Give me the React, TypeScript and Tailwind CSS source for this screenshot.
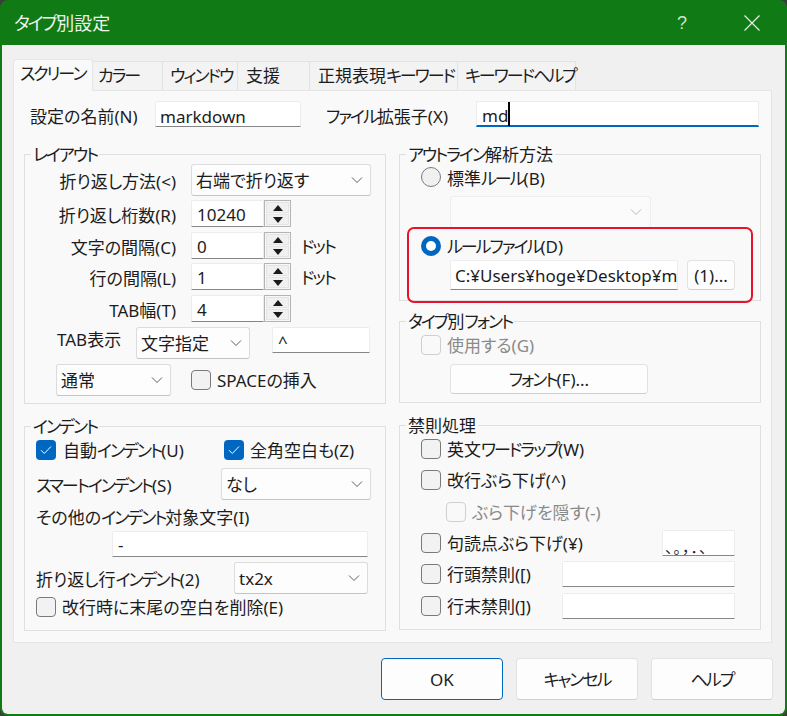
import type { ReactNode } from "react";

// katakana is set narrower in the dialog font, so tighten just those runs
function Tx({ children, pad = "pt-[2px]" }: { children: string; pad?: string }) {
  const parts = children.split(/([\u30A1-\u30FC]+)/);
  return (
    <span className={"block whitespace-nowrap " + pad}>
      {parts.map((p, i) =>
        i % 2 ? (
          <span key={i} className="tracking-[-2px]">
            {p}
          </span>
        ) : (
          p
        )
      )}
    </span>
  );
}

function Chevron({ muted }: { muted?: boolean }) {
  return (
    <svg width="12" height="8" viewBox="0 0 12 8" className="shrink-0" fill="none">
      <path d="M1 1.5 6 6.5 11 1.5" stroke={muted ? "#b5b5b5" : "#606060"} strokeWidth="1" />
    </svg>
  );
}

function Input({ value, className = "" }: { value?: string; className?: string }) {
  return (
    <div className={"flex items-center shrink-0 bg-white border border-[#ececec] border-b-[#868686] rounded-t-[2px] overflow-hidden whitespace-nowrap " + className}>
      {value}
    </div>
  );
}

function Select({ value, className = "" }: { value?: string; className?: string }) {
  return (
    <div className={"flex items-center justify-between shrink-0 h-[32px] bg-[#fdfdfd] border border-[#dcdcdc] border-b-[#c4c4c4] rounded-[3px] pl-[4px] pr-[7px] " + className}>
      <Tx>{value ?? ""}</Tx>
      <Chevron />
    </div>
  );
}

function Spin({ value }: { value: string }) {
  return (
    <div className="flex h-[27px] shrink-0">
      <Input value={value} className="w-[73px] h-[27px] pl-[5px] pt-[2px]" />
      <div className="flex flex-col w-[27px] h-[27px] border border-[#b4b4b4] bg-[#f7f7f7] p-[1px] gap-[1px]">
        <div className="flex-1 flex items-center justify-center bg-[#f0f0f0] border border-[#e4e4e4]">
          <svg width="10" height="6" viewBox="0 0 10 6"><path d="M5 0 10 6H0z" fill="#1a1a1a" /></svg>
        </div>
        <div className="flex-1 flex items-center justify-center bg-[#f0f0f0] border border-[#e4e4e4]">
          <svg width="10" height="6" viewBox="0 0 10 6"><path d="M5 6 10 0H0z" fill="#1a1a1a" /></svg>
        </div>
      </div>
    </div>
  );
}

function Check({ checked, disabled }: { checked?: boolean; disabled?: boolean }) {
  if (checked) {
    return (
      <div className="w-[20px] h-[20px] shrink-0 rounded-[4px] bg-[#0067c0] flex items-center justify-center">
        <svg width="12" height="10" viewBox="0 0 12 10" fill="none">
          <path d="M1 5.2 4.3 8.5 11 1.5" stroke="#fff" strokeWidth="1" />
        </svg>
      </div>
    );
  }
  return (
    <div
      className={
        "w-[20px] h-[20px] shrink-0 rounded-[4px] border " +
        (disabled ? "border-[#cfcfcf] bg-[#f9f9f9]" : "border-[#7a7a7a] bg-[#f2f2f2]")
      }
    />
  );
}

function Radio({ checked }: { checked?: boolean }) {
  if (checked) {
    return (
      <div className="w-[20px] h-[20px] shrink-0 rounded-full bg-[#0067c0] flex items-center justify-center">
        <div className="w-[10px] h-[10px] rounded-full bg-white" />
      </div>
    );
  }
  return <div className="w-[20px] h-[20px] shrink-0 rounded-full border border-[#7a7a7a] bg-[#f0f0f0]" />;
}

function Btn({ children, className = "", primary }: { children: string; className?: string; primary?: boolean }) {
  return (
    <div
      className={
        "flex items-center justify-center shrink-0 bg-[#fdfdfd] border rounded-[4px] " +
        (primary ? "border-[#0067c0] " : "border-[#e2e2e2] border-b-[#cfcfcf] ") +
        className
      }
    >
      <Tx>{children}</Tx>
    </div>
  );
}

function Group({ title, className = "", children }: { title: string; className?: string; children: ReactNode }) {
  return (
    <div className={"relative border border-[#dfdfdf] " + className}>
      <span className="absolute left-[6px] top-[-10px] h-[22px] bg-[#f9f9f9] px-[2px]">
        <Tx pad="pt-0">{title}</Tx>
      </span>
      {children}
    </div>
  );
}

function Label({ children }: { children: string }) {
  return (
    <div className="w-[151px] text-right shrink-0">
      <Tx pad="pt-[4px]">{children}</Tx>
    </div>
  );
}

function CheckRow({ label, className = "", disabled }: { label: string; className?: string; disabled?: boolean }) {
  return (
    <div className={"flex items-center gap-[6px] h-[20px] " + className}>
      <Check disabled={disabled} />
      <Tx>{label}</Tx>
    </div>
  );
}

const TABS = [
  { label: "カラー", cls: "w-[70px] pl-[5px]" },
  { label: "ウィンドウ", cls: "w-[75px] pl-[7px]" },
  { label: "支援", cls: "w-[72px] pl-[8px]" },
  { label: "正規表現キーワード", cls: "w-[148px] pl-[8px]" },
  { label: "キーワードヘルプ", cls: "w-[118px] pl-[7px]" },
];

export default function App() {
  return (
    <div className="w-[787px] h-[716px] bg-[#3c3c3c] text-[#1c1c1c] text-[17px] leading-[20px] font-['Noto_Sans','Noto_Sans_CJK_JP',sans-serif] [font-feature-settings:'palt'] overflow-hidden">
      <div className="h-full flex flex-col bg-[#107a14] rounded-[8px] px-[2px] pb-[2px]">
        <div className="h-[45px] shrink-0 flex items-center pl-[12px] pr-[25px] text-[#eef5ee] text-[18px]">
          <Tx pad="pt-0">タイプ別設定</Tx>
          <span className="ml-auto w-[16px] text-center text-[#cfe3cf] font-['Liberation_Sans',sans-serif]">?</span>
          <svg width="16" height="16" viewBox="0 0 16 16" className="ml-[54px]" fill="none">
            <path d="M.5.5l15 15M15.5.5l-15 15" stroke="#e8f2e8" strokeWidth="1.2" />
          </svg>
        </div>

        <div className="flex-1 bg-[#f0f0f0] rounded-b-[6px] pl-[11px] pt-[14px]">
          <div className="flex items-end h-[31px]">
            <div className="w-[80px] h-[32px] relative z-10 -mb-px bg-[#f9f9f9] border border-[#e5e5e5] border-b-0 rounded-t-[3px] pl-[6px] pt-[4px]">
              <Tx pad="pt-0">スクリーン</Tx>
            </div>
            {TABS.map((t) => (
              <div key={t.label} className={"h-[29px] bg-[#f3f3f3] border-t border-r border-[#e3e3e3] pt-[4px] " + t.cls}>
                <Tx pad="pt-0">{t.label}</Tx>
              </div>
            ))}
          </div>

          <div className="w-[759px] h-[553px] bg-[#f9f9f9] border border-[#e5e5e5] pl-[10px]">
            <div className="flex items-center h-[26px] mt-[10px] pl-[6px]">
              <div className="w-[125px] shrink-0"><Tx pad="pt-[6px]">設定の名前(N)</Tx></div>
              <Input value="markdown" className="w-[146px] h-[26px] pl-[4px] pt-[6px]" />
              <div className="ml-[25px] w-[150px] shrink-0"><Tx pad="pt-[6px]">ファイル拡張子(X)</Tx></div>
              <div className="flex items-center w-[283px] h-[26px] shrink-0 bg-white border-t border-x border-[#ececec] border-b-2 border-b-[#0067c0] pl-[5px]">
                <span className="pt-[5px]">md</span>
                <span className="inline-block w-[1.5px] h-[24px] bg-black" />
              </div>
            </div>

            <div className="grid grid-cols-[362px_362px] gap-x-[13px] mt-[27px]">
              <div className="flex flex-col gap-[22px]">
                <Group title="レイアウト" className="h-[250px]">
                  <div className="flex items-center h-[32px] mt-[9px]">
                    <Label>折り返し方法(&lt;)</Label>
                    <Select value="右端で折り返す" className="ml-[15px] w-[180px]" />
                  </div>
                  <div className="flex items-center h-[27px] mt-[4px]">
                    <Label>折り返し桁数(R)</Label>
                    <div className="ml-[15px]"><Spin value="10240" /></div>
                  </div>
                  <div className="flex items-center h-[27px] mt-[5px]">
                    <Label>文字の間隔(C)</Label>
                    <div className="ml-[15px]"><Spin value="0" /></div>
                    <span className="ml-[10px]"><Tx>ドット</Tx></span>
                  </div>
                  <div className="flex items-center h-[27px] mt-[4px]">
                    <Label>行の間隔(L)</Label>
                    <div className="ml-[15px]"><Spin value="1" /></div>
                    <span className="ml-[10px]"><Tx>ドット</Tx></span>
                  </div>
                  <div className="flex items-center h-[27px] mt-[5px]">
                    <Label>TAB幅(T)</Label>
                    <div className="ml-[15px]"><Spin value="4" /></div>
                  </div>
                  <div className="flex items-start h-[32px] mt-[5px]">
                    <div className="ml-[32px] w-[79px] shrink-0"><Tx pad="pt-[3px]">TAB表示</Tx></div>
                    <Select value="文字指定" className="w-[114px]" />
                    <Input value="^" className="ml-[22px] w-[98px] h-[26px] pl-[5px] pt-[3px]" />
                  </div>
                  <div className="flex items-center h-[32px] mt-[5px] pl-[31px]">
                    <Select value="通常" className="w-[115px]" />
                    <CheckRow label="SPACEの挿入" className="ml-[20px] gap-[5px]" />
                  </div>
                </Group>

                <Group title="インデント" className="h-[205px]">
                  <div className="flex items-center h-[20px] mt-[13px] pl-[11px]">
                    <div className="flex items-center gap-[7px] w-[188px]">
                      <Check checked />
                      <Tx>自動インデント(U)</Tx>
                    </div>
                    <div className="flex items-center gap-[6px]">
                      <Check checked />
                      <Tx>全角空白も(Z)</Tx>
                    </div>
                  </div>
                  <div className="flex items-center h-[32px] mt-[8px] pl-[11px]">
                    <div className="w-[185px] shrink-0"><Tx pad="pt-[4px]">スマートインデント(S)</Tx></div>
                    <Select value="なし" className="w-[150px]" />
                  </div>
                  <div className="h-[20px] mt-[8px] pl-[11px]"><Tx pad="pt-0">その他のインデント対象文字(I)</Tx></div>
                  <Input value="-" className="mt-[3px] ml-[87px] w-[256px] h-[26px] pl-[5px] pt-[2px]" />
                  <div className="flex items-center h-[32px] mt-[5px] pl-[11px]">
                    <div className="w-[198px] shrink-0"><Tx pad="pt-[4px]">折り返し行インデント(2)</Tx></div>
                    <Select value="tx2x" className="w-[134px]" />
                  </div>
                  <CheckRow label="改行時に末尾の空白を削除(E)" className="mt-[3px] pl-[11px]" />
                </Group>
              </div>

              <div className="flex flex-col">
                <Group title="アウトライン解析方法" className="h-[147px]">
                  <div className="flex items-center gap-[6px] h-[20px] mt-[12px] pl-[21px]">
                    <Radio />
                    <Tx pad="pt-[4px]">標準ルール(B)</Tx>
                  </div>
                  <div className="flex items-center justify-end mt-[9px] ml-[50px] w-[201px] h-[32px] bg-[#fbfbfb] border border-[#eeeeee] rounded-[3px] pr-[8px]">
                    <Chevron muted />
                  </div>
                  <div className="flex items-center gap-[6px] h-[20px] mt-[8px] pl-[21px]">
                    <Radio checked />
                    <Tx>ルールファイル(D)</Tx>
                  </div>
                  <div className="flex items-center h-[30px] mt-[4px] ml-[50px]">
                    <Input value="C:¥Users¥hoge¥Desktop¥m" className="w-[228px] h-[30px] pl-[4px] pt-[2px]" />
                    <Btn className="ml-[9px] w-[48px] h-[30px]">(1)...</Btn>
                  </div>
                  <div className="absolute left-[7px] top-[72px] w-[346px] h-[76px] border-2 border-[#e8132b] rounded-[7px] pointer-events-none" />
                </Group>

                <Group title="タイプ別フォント" className="h-[82px] mt-[20px]">
                  <CheckRow label="使用する(G)" disabled className="mt-[13px] pl-[21px] text-[#8a8a8a]" />
                  <Btn className="mt-[9px] ml-[50px] w-[198px] h-[30px]">フォント(F)...</Btn>
                </Group>

                <Group title="禁則処理" className="h-[205px] mt-[22px]">
                  <CheckRow label="英文ワードラップ(W)" className="mt-[13px] pl-[21px]" />
                  <CheckRow label="改行ぶら下げ(^)" className="mt-[11px] pl-[21px]" />
                  <CheckRow label="ぶら下げを隠す(-)" disabled className="mt-[12px] pl-[46px] text-[#8a8a8a]" />
                  <div className="flex items-center justify-between h-[26px] mt-[8px] pl-[21px] pr-[25px]">
                    <CheckRow label="句読点ぶら下げ(¥)" />
                    <Input value="、。，．、" className="w-[73px] h-[26px] pl-[2px] pt-[7px] text-[15px] tracking-[1px] [font-feature-settings:normal]" />
                  </div>
                  <div className="flex items-center justify-between h-[26px] mt-[5px] pl-[21px] pr-[25px]">
                    <CheckRow label="行頭禁則([)" />
                    <Input className="w-[173px] h-[26px]" />
                  </div>
                  <div className="flex items-center justify-between h-[26px] mt-[6px] pl-[21px] pr-[25px]">
                    <CheckRow label="行末禁則(])" />
                    <Input className="w-[173px] h-[26px]" />
                  </div>
                </Group>
              </div>
            </div>
          </div>

          <div className="flex justify-end gap-[13px] mt-[15px] pr-[12px]">
            <Btn primary className="w-[122px] h-[42px]">OK</Btn>
            <Btn className="w-[122px] h-[42px]">キャンセル</Btn>
            <Btn className="w-[122px] h-[42px]">ヘルプ</Btn>
          </div>
        </div>
      </div>
    </div>
  );
}
